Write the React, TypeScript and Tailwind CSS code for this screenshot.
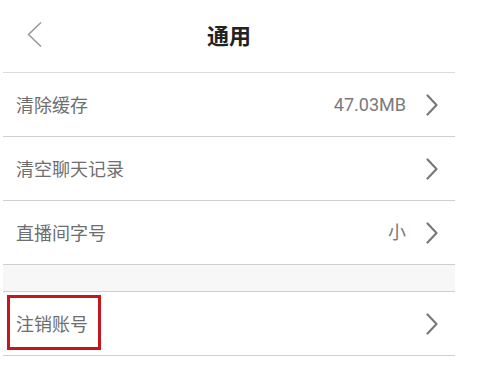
import React from "react";

const font = { fontFamily: '"Noto Sans CJK SC", "Noto Sans", sans-serif' };

function ChevronRight() {
  return (
    <svg width="12" height="22" viewBox="0 0 12 22" className="shrink-0">
      <path d="M1.5 1.5 L10.5 11 L1.5 20.5" fill="none" stroke="#7a7a7a" strokeWidth="2.2" strokeLinecap="round" strokeLinejoin="round" />
    </svg>
  );
}

function Row({ label, value }: { label: string; value?: string }) {
  return (
    <div className="flex items-center h-[64px] pl-[13px] pr-[17px] border-b border-[#cfcfcf]">
      <span className="text-[18px] text-[#6e6e6e] flex-1">{label}</span>
      {value && (
        <span className="text-[18px] text-[#7a7a7a] mr-[20px]" style={{ fontFamily: 'Roboto, "Noto Sans CJK SC", sans-serif' }}>
          {value}
        </span>
      )}
      <ChevronRight />
    </div>
  );
}

export default function App() {
  return (
    <div className="w-[478px] h-[371px] bg-white overflow-hidden" style={font}>
      <div className="ml-[3px] w-[452px]">
        <div className="relative h-[73px] border-b border-[#dcdcdc] flex items-center justify-center">
          <svg width="17" height="27" viewBox="0 0 17 27" className="absolute left-[23px] top-[21px]">
            <path d="M15 1.5 L2.5 13.5 L15 25.5" fill="none" stroke="#9a9a9a" strokeWidth="1.6" />
          </svg>
          <span className="text-[22px] font-bold text-[#222] pb-[3px]">通用</span>
        </div>
        <Row label="清除缓存" value="47.03MB" />
        <Row label="清空聊天记录" />
        <Row label="直播间字号" value="小" />
        <div className="h-[26px] bg-[#f7f7f7]" />
        <div className="relative">
          <div className="flex items-center h-[65px] pl-[13px] pr-[17px] border-y border-[#cfcfcf]">
            <span className="text-[18px] text-[#6e6e6e] flex-1">注销账号</span>
            <ChevronRight />
          </div>
          <div className="absolute left-[4px] top-[4px] w-[94px] h-[55px] border-[3px] border-[#c4161c]" />
        </div>
      </div>
    </div>
  );
}
